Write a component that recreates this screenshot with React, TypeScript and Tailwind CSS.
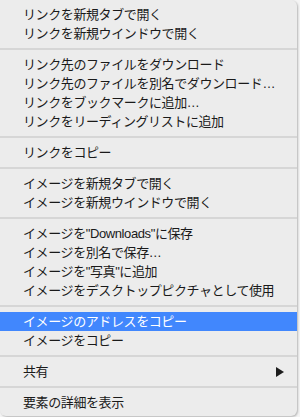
import React from "react";

type Item = { label: string; highlighted?: boolean; submenu?: boolean } | "sep";

const items: Item[] = [
  { label: "リンクを新規タブで開く" },
  { label: "リンクを新規ウインドウで開く" },
  "sep",
  { label: "リンク先のファイルをダウンロード" },
  { label: "リンク先のファイルを別名でダウンロード…" },
  { label: "リンクをブックマークに追加…" },
  { label: "リンクをリーディングリストに追加" },
  "sep",
  { label: "リンクをコピー" },
  "sep",
  { label: "イメージを新規タブで開く" },
  { label: "イメージを新規ウインドウで開く" },
  "sep",
  { label: "イメージを\"Downloads\"に保存" },
  { label: "イメージを別名で保存…" },
  { label: "イメージを\"写真\"に追加" },
  { label: "イメージをデスクトップピクチャとして使用" },
  "sep",
  { label: "イメージのアドレスをコピー", highlighted: true },
  { label: "イメージをコピー" },
  "sep",
  { label: "共有", submenu: true },
  "sep",
  { label: "要素の詳細を表示" },
];

export default function App() {
  return (
    <div className="w-[300px] h-[417px] bg-[#f4f4f4] relative overflow-hidden">
      <div
        className="w-[297px] bg-[#ececec] rounded-b-[6px] rounded-tr-[6px] shadow-[1px_1px_2px_rgba(0,0,0,0.25)] pt-[5px] pb-[4px] text-[13px] tracking-[-0.4px] text-[#1a1a1a]"
        style={{ fontFamily: '"Liberation Sans", "Noto Sans CJK JP", sans-serif' }}
      >
        {items.map((it, i) =>
          it === "sep" ? (
            <div key={i} className="h-[12px] flex items-center">
              <div className="h-[2px] w-full bg-[#d6d6d6]" />
            </div>
          ) : (
            <div
              key={i}
              className={
                it.highlighted
                  ? "h-[19px] flex items-center pl-[23px] pr-[12px] bg-[#4187fd] text-white"
                  : "h-[19px] flex items-center pl-[23px] pr-[12px]"
              }
            >
              <span className="flex-1 whitespace-nowrap leading-[19px]">{it.label}</span>
              {it.submenu && (
                <svg width="8" height="10" viewBox="0 0 8 10" className="mr-[1px]">
                  <polygon points="0,0 8,5 0,10" fill="#1d1d1d" />
                </svg>
              )}
            </div>
          )
        )}
      </div>
    </div>
  );
}
